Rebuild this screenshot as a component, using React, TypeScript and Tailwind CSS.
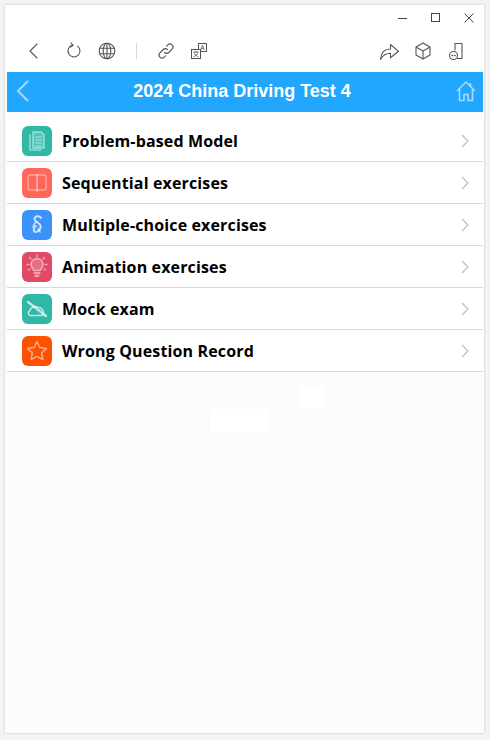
const rows = [
  { label: "Problem-based Model", bg: "bg-[#2fb8a6]", icon: (
    <g><path fill="#ffffff" fillOpacity="0.18" d="M11 6h8l3 3v13h-11z" /><path d="M8 9v15h10.500" /><path d="M13.500 11h6M13.500 14h6M13.500 17h6M13.500 20h6" strokeWidth="1.200" /></g>
  ) },
  { label: "Sequential exercises", bg: "bg-[#ff6759]", icon: (
    <g strokeOpacity="0.4"><rect x="6" y="7" width="18" height="15" rx="2" /><path d="M15 7v16" strokeWidth="2" /></g>
  ) },
  { label: "Multiple-choice exercises", bg: "bg-[#3a92fb]", icon: (
    <g strokeOpacity="0.75"><path strokeWidth="2" d="M19 8c-1.500-2-5-2.300-6.200-.3-1.300 2.300 1.400 4 3.400 5.300 2 1.300 3.300 3 2 5.500-1.300 2.500-4 4.500-5.700 3-1.700-1.500-.5-4 1.500-5.500" /><path strokeWidth="1.500" d="M13.500 12.500c-1 1.500-2 3-2.500 4.500M16 19c1 1 2 2 2 3" /></g>
  ) },
  { label: "Animation exercises", bg: "bg-[#e04a67]", icon: (
    <g><path fill="#ffffff" fillOpacity="0.2" d="M11.500 18.500c0-2-2.500-3-2.500-6a6 6 0 0 1 12 0c0 3-2.500 4-2.500 6z" /><path strokeWidth="2.200" d="M12.500 21h5M13.500 23.800h3" /><path d="M15 3v2M7.500 5.500l1.500 1.500M22.500 5.500L21 7M5 12.500h2M23 12.500h2M6.500 18l1.500-1M23.500 18L22 17" /></g>
  ) },
  { label: "Mock exam", bg: "bg-[#2fb8a6]", icon: (
    <g strokeOpacity="0.7"><path d="M8.500 21.500c-2.500-.5-3-3.500-.5-5 .5-3 5-5.500 8.500-3 3 0 6 3 5 6.500-.3 1-1 1.500-2 1.500z" /><path strokeWidth="2.400" d="M6 8l18 14" /></g>
  ) },
  { label: "Wrong Question Record", bg: "bg-[#ff5200]", icon: (
    <path d="M15 5.500l2.900 6.100 6.600.8-4.900 4.600 1.300 6.600-5.900-3.300-5.900 3.300 1.300-6.600-4.900-4.600 6.600-.8z" />
  ) },
];

function Tool({ children, w = 20 }: { children: React.ReactNode; w?: number }) {
  return (
    <svg width={w} height="20" viewBox="0 0 20 20" fill="none" stroke="#555" strokeWidth="1.100" strokeLinecap="round" strokeLinejoin="round">
      {children}
    </svg>
  );
}

export default function App() {
  return (
    <div className="h-[740px] w-[490px] bg-[#f3f3f3] pb-[7px] pl-[5px] pr-[6px] pt-[5px] font-['Liberation_Sans',sans-serif]">
      <div className="relative flex h-full flex-col bg-[#fcfcfc] shadow-[0_0_2px_#bdbdbd]">
        <div className="flex h-[67px] flex-col bg-white">
          <div className="flex h-[25px] items-center justify-end gap-[21px] pr-[9px]">
            <svg width="12" height="12" viewBox="0 0 12 12" fill="none" stroke="#444" strokeWidth="1"><path d="M1 6.500h9" /></svg>
            <svg width="12" height="12" viewBox="0 0 12 12" fill="none" stroke="#444" strokeWidth="1"><rect x="1.500" y="1.500" width="8" height="8" /></svg>
            <svg width="12" height="12" viewBox="0 0 12 12" fill="none" stroke="#444" strokeWidth="1"><path d="M1.500 1.500l9 9M10.500 1.500l-9 9" /></svg>
          </div>
          <div className="flex flex-1 items-center pb-[1px] pl-[19px] pr-[18px]">
            <Tool><path d="M13 3l-7 7 7 7" /></Tool>
            <div className="ml-[20px]">
              <Tool><path d="M8 4.300a6 6 0 1 0 5.500.8" /><path d="M7 1.800l2.200 2.600-2.800 1.600" /></Tool>
            </div>
            <div className="ml-[13px]">
              <Tool><circle cx="10" cy="10" r="7.800" /><ellipse cx="10" cy="10" rx="3.800" ry="7.800" /><path d="M2.800 7.300h14.400M2.800 12.700h14.400M10 2.200v15.600" /></Tool>
            </div>
            <div className="ml-[19px] h-[16px] w-px bg-[#d9d9d9]" />
            <div className="ml-[19px]">
              <Tool><path d="M8.500 11.500a3 3 0 0 0 4.300 0l3.300-3.300a3 3 0 0 0-4.300-4.300l-1.300 1.300" /><path d="M11.500 8.500a3 3 0 0 0-4.300 0l-3.300 3.300a3 3 0 0 0 4.300 4.300l1.300-1.300" /></Tool>
            </div>
            <div className="ml-[13px]">
              <svg width="20" height="20" viewBox="0 0 20 20" fill="none" stroke="#555" strokeWidth="1">
                <rect x="9.500" y="2.500" width="8" height="8" />
                <path d="M11.800 8.800l1.700-4.500 1.700 4.500M12.400 7.400h2.200" strokeWidth="0.800" />
                <rect x="2.500" y="8.500" width="9" height="9" fill="#fff" />
                <path d="M4.500 11h5M7 9.800V11M5 11c.5 2.500 2.500 4 4.500 4.800M9 11c-.5 2.500-2.500 4-4.500 4.800" strokeWidth="0.800" />
              </svg>
            </div>
            <div className="ml-auto flex items-center gap-[13px]">
              <Tool><path d="M.5 18.500c.5-7 4.500-10.500 10-10.500V3.500l8 6.800-8 6.500v-4.500c-4.500 0-7.500 1.700-10 6.200z" /></Tool>
              <Tool><path d="M10 2l7 4v8l-7 4-7-4V6zM3 6l7 4 7-4M10 10v8" /></Tool>
              <Tool><path d="M9 9V2.500h7v15h-4.500" /><circle cx="7.500" cy="14.500" r="4" /><path d="M6 14.500h.6M8.500 14.500h.6" strokeWidth="1.300" /></Tool>
            </div>
          </div>
        </div>

        <div className="ml-[2px] mr-px flex h-[40px] items-center bg-[#22a7ff] pb-[2px] pl-[8px] pr-[7px]">
          <svg width="16" height="24" viewBox="0 0 16 24" fill="none" stroke="#a7dcff" strokeWidth="2"><path d="M13 2L3 12l10 10" /></svg>
          <div className="flex-1 pr-[3px] text-center text-[18px] font-bold text-white">2024 China Driving Test 4</div>
          <svg width="20" height="22" viewBox="0 0 20 22" fill="none" stroke="#a7dcff" strokeWidth="1.500"><path d="M1 11L10 2l9 9M3.500 9v11.500h4.500v-6h4v6h4.500V9M14.500 3v3" /></svg>
        </div>

        <div className="mt-[8px] flex flex-col">
          {rows.map((r) => (
            <div key={r.label} className="ml-[2px] mr-px flex h-[42px] items-center border-b border-[#d9d9d9] bg-white pl-[15px] pr-[14px]">
              <div className={`flex h-[30px] w-[30px] items-center justify-center rounded-[6px] ${r.bg}`}>
                <svg width="30" height="30" viewBox="0 0 30 30" fill="none" stroke="#ffffff" strokeOpacity="0.5" strokeWidth="1.500" strokeLinejoin="round" strokeLinecap="round">
                  {r.icon}
                </svg>
              </div>
              <span className="ml-[10px] flex-1 font-['Open_Sans',sans-serif] text-[16px] font-bold tracking-[0.14px] text-black">{r.label}</span>
              <svg width="8" height="14" viewBox="0 0 8 14" fill="none" stroke="#bdbdbd" strokeWidth="1.200"><path d="M1 1l6 6-6 6" /></svg>
            </div>
          ))}
        </div>

        <div className="absolute left-[205px] top-[404px] h-[23px] w-[58px] bg-white" />
        <div className="absolute left-[296px] top-[381px] h-[22px] w-[24px] bg-white" />
      </div>
    </div>
  );
}
